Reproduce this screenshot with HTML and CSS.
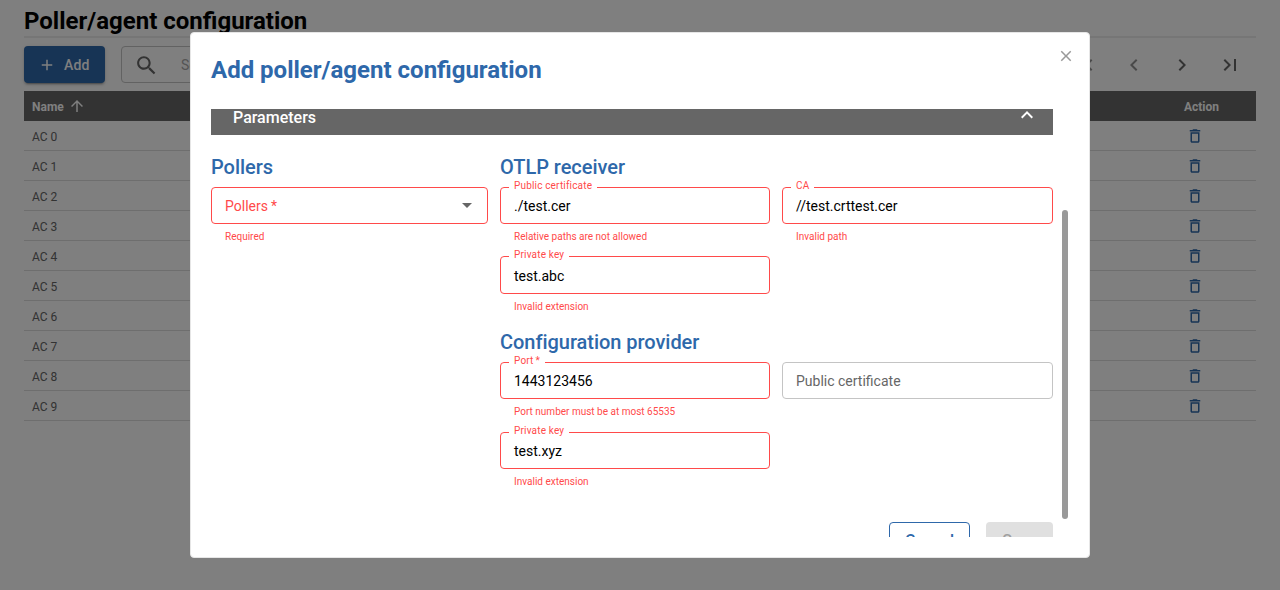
FILE: index.html
```html
<!DOCTYPE html>
<html lang="en">
<head>
<meta charset="utf-8">
<title>Poller/agent configuration</title>
<link rel="stylesheet" href="styles.css">
</head>
<body>
<svg class="defs" width="0" height="0">
  <symbol id="trash" viewBox="0 0 24 24"><path d="M6 19c0 1.100.9 2 2 2h8c1.100 0 2-.9 2-2V7H6v12zM8 9h8v10H8V9zm7.500-5l-1-1h-5l-1 1H5v2h14V4z"/></symbol>
</svg>
<main class="page">
  <h1 class="page-title">Poller/agent configuration</h1>
  <div class="toolbar">
    <button class="add-button"><svg class="icon-plus" viewBox="0 0 24 24"><path d="M19 13h-6v6h-2v-6H5v-2h6V5h2v6h6v2z"/></svg>Add</button>
    <div class="search">
      <svg class="icon-search" viewBox="0 0 24 24"><path d="M15.500 14h-.79l-.28-.27C15.410 12.590 16 11.110 16 9.500 16 5.910 13.090 3 9.500 3S3 5.910 3 9.500 5.910 16 9.500 16c1.610 0 3.090-.59 4.230-1.570l.27.28v.79l5 4.990L20.490 19l-4.990-5zm-6 0C7.010 14 5 11.990 5 9.500S7.010 5 9.500 5 14 7.010 14 9.500 11.990 14 9.500 14z"/></svg>
      <span>Search</span>
    </div>
    <nav class="pager">
      <svg class="disabled" viewBox="0 0 24 24"><path d="M18.410 16.590L13.820 12l4.590-4.590L17 6l-6 6 6 6zM6 6h2v12H6z"/></svg>
      <svg class="disabled" viewBox="0 0 24 24"><path d="M15.410 16.590L10.830 12l4.580-4.590L14 6l-6 6 6 6z"/></svg>
      <svg viewBox="0 0 24 24"><path d="M8.590 16.590L13.170 12 8.590 7.410 10 6l6 6-6 6z"/></svg>
      <svg viewBox="0 0 24 24"><path d="M5.590 7.410L10.180 12l-4.590 4.590L7 18l6-6-6-6zM16 6h2v12h-2z"/></svg>
    </nav>
  </div>
  <div class="table">
    <div class="row head"><span class="name">Name<svg class="icon-sort" viewBox="0 0 24 24"><path d="M4 12l1.410 1.410L11 7.830V20h2V7.830l5.580 5.590L20 12l-8-8-8 8z"/></svg></span><span class="action">Action</span></div>
    <div class="row"><span>AC 0</span><svg><use href="#trash"/></svg></div>
    <div class="row"><span>AC 1</span><svg><use href="#trash"/></svg></div>
    <div class="row"><span>AC 2</span><svg><use href="#trash"/></svg></div>
    <div class="row"><span>AC 3</span><svg><use href="#trash"/></svg></div>
    <div class="row"><span>AC 4</span><svg><use href="#trash"/></svg></div>
    <div class="row"><span>AC 5</span><svg><use href="#trash"/></svg></div>
    <div class="row"><span>AC 6</span><svg><use href="#trash"/></svg></div>
    <div class="row"><span>AC 7</span><svg><use href="#trash"/></svg></div>
    <div class="row"><span>AC 8</span><svg><use href="#trash"/></svg></div>
    <div class="row"><span>AC 9</span><svg><use href="#trash"/></svg></div>
  </div>
</main>

<div class="backdrop">
  <section class="modal">
    <svg class="close" viewBox="0 0 24 24"><path d="M19 6.410L17.590 5 12 10.590 6.410 5 5 6.410 10.590 12 5 17.590 6.410 19 12 13.410 17.590 19 19 17.590 13.410 12z"/></svg>
    <h2 class="modal-title">Add poller/agent configuration</h2>
    <div class="modal-body">
      <div class="group-header"><span>Parameters</span><svg viewBox="0 0 24 24"><path d="M12 8l-6 6 1.410 1.410L12 10.830l4.590 4.580L18 14z"/></svg></div>
      <div class="columns">
        <div>
          <h3>Pollers</h3>
          <div class="field error">
            <div class="box select"><span class="placeholder">Pollers<span class="star">*</span></span><svg viewBox="0 0 24 24"><path d="M7 10l5 5 5-5z"/></svg></div>
            <p class="helper">Required</p>
          </div>
        </div>
        <div>
          <h3>OTLP receiver</h3>
          <div class="fields">
            <div class="field error"><div class="box"><label>Public certificate</label>./test.cer</div><p class="helper">Relative paths are not allowed</p></div>
            <div class="field error"><div class="box"><label>CA</label>//test.crttest.cer</div><p class="helper">Invalid path</p></div>
            <div class="field error tall"><div class="box"><label>Private key</label>test.abc</div><p class="helper">Invalid extension</p></div>
          </div>
          <h3 class="second">Configuration provider</h3>
          <div class="fields provider">
            <div class="field error"><div class="box"><label>Port<span class="star">*</span></label>1443123456</div><p class="helper">Port number must be at most 65535</p></div>
            <div class="field"><div class="box"><span class="placeholder">Public certificate</span></div></div>
            <div class="field error"><div class="box"><label>Private key</label>test.xyz</div><p class="helper">Invalid extension</p></div>
          </div>
        </div>
      </div>
      <div class="buttons"><button class="cancel">Cancel</button><button class="save">Save</button></div>
    </div>
    <div class="scrollbar"></div>
  </section>
</div>
</body>
</html>
```
FILE: styles.css
```css
* { box-sizing: border-box; }
body { margin: 0; height: 590px; overflow: hidden; background: #fff; font-family: Roboto, sans-serif; font-size: 14px; color: #000; }
h1, h2, h3, p { margin: 0; }
button { font-family: inherit; border: 0; padding: 0; }
svg { fill: currentColor; flex: none; }
.defs { position: absolute; }

/* Listing page */
.page { padding: 4px 24px 0; }
.page-title { height: 34px; line-height: 34px; font-size: 24px; font-weight: 700; border-bottom: 2px solid #ededed; }
.toolbar { display: flex; align-items: center; height: 53px; }
.add-button { display: flex; align-items: center; width: 81px; height: 37px; padding: 0 0 0 15px; border-radius: 4px; background: #2e68aa; color: #fff; font-size: 14px; font-weight: 500; letter-spacing: .15px; box-shadow: 0 3px 1px -2px rgba(0,0,0,.2), 0 2px 2px rgba(0,0,0,.14), 0 1px 5px rgba(0,0,0,.12); }
.icon-plus { width: 18px; height: 18px; margin: 0 8px 0 -1px; }
.search { display: flex; align-items: center; width: 400px; height: 37px; margin-left: 16px; padding: 1px 0 0 12px; border: 1px solid #c4c4c4; border-radius: 4px; color: #a8a8a8; }
.icon-search { width: 25px; height: 25px; margin-right: 22px; color: #666; }
.pager { display: flex; gap: 24px; margin-left: auto; padding: 1px 14px 0 0; color: #666; }
.pager svg { width: 24px; height: 24px; }
.pager .disabled { opacity: .7; }
.row { display: flex; align-items: center; justify-content: space-between; height: 30px; padding: 2px 52px 0 8px; border-bottom: 1px solid #dcdcdc; color: #666; font-size: 12px; }
.row svg { width: 18px; height: 18px; margin-top: -2px; color: #2e68aa; }
.head { padding-right: 37px; border: 0; background: #666; color: #fff; font-weight: 700; }
.name { display: flex; align-items: center; }
.head .icon-sort { width: 18px; height: 18px; margin: -2px 0 0 4px; color: #fff; }

/* Dialog */
.backdrop { position: fixed; inset: 0; display: flex; align-items: center; justify-content: center; background: rgba(0,0,0,.5); }
.modal { position: relative; width: 900px; height: 526px; padding: 21px 20px 0; border: 1px solid #e6e6e6; border-radius: 4px; background: #fff; }
.close { position: absolute; top: 14px; right: 14px; width: 18px; height: 18px; color: #999; }
.modal-title { height: 55px; line-height: 32px; font-size: 24px; font-weight: 700; color: #2e68aa; }
.modal-body { width: 842px; height: 428px; overflow: hidden; }
.group-header { display: flex; align-items: center; justify-content: space-between; height: 26px; padding: 0 14px 9px 22px; background: #666; color: #fff; font-size: 16px; font-weight: 500; }
.group-header svg { width: 24px; height: 24px; margin-top: -6px; }
.columns { display: grid; grid-template-columns: 277px 553px; gap: 12px; height: 387px; padding-top: 20px; }
h3 { height: 32px; line-height: 24px; font-size: 20px; font-weight: 500; letter-spacing: -.04px; color: #2e68aa; }
.second { margin-top: 4px; }
.fields { display: grid; grid-template-columns: 270px 271px; column-gap: 12px; grid-template-rows: 69px 70px; }
.provider { grid-template-rows: 70px 70px; }
.box { position: relative; display: flex; align-items: center; height: 37px; padding: 1px 13px 0; border: 1px solid #c4c4c4; border-radius: 4px; }
.tall .box { height: 38px; padding-top: 2px; }
.error .box { border-color: #ff4a4a; }
.box label { position: absolute; left: 8px; top: -8px; padding: 0 5px; background: #fff; color: #ff4a4a; font-size: 10px; line-height: 12px; letter-spacing: .17px; }
.star { margin-left: 3px; }
.box label .star { margin-left: 2px; }
.placeholder { color: #666; }
.error .placeholder { color: #ff4a4a; }
.select { justify-content: space-between; padding-right: 8px; }
.select svg { width: 24px; height: 24px; color: #666; margin-top: -2px; }
.helper { padding: 7px 14px 0; color: #ff4a4a; font-size: 10px; line-height: 12px; }
.buttons { display: flex; justify-content: flex-end; gap: 16px; }
.buttons button { height: 37px; flex: none; border-radius: 4px; font-size: 16px; font-weight: 500; }
.cancel { width: 81px; border: 1px solid #2e68aa; background: #fff; color: #2e68aa; }
.save { width: 67px; background: #e0e0e0; color: #a0a0a0; }
.scrollbar { position: absolute; right: 21px; top: 177px; width: 6px; height: 309px; border-radius: 3px; background: #999; }
```
